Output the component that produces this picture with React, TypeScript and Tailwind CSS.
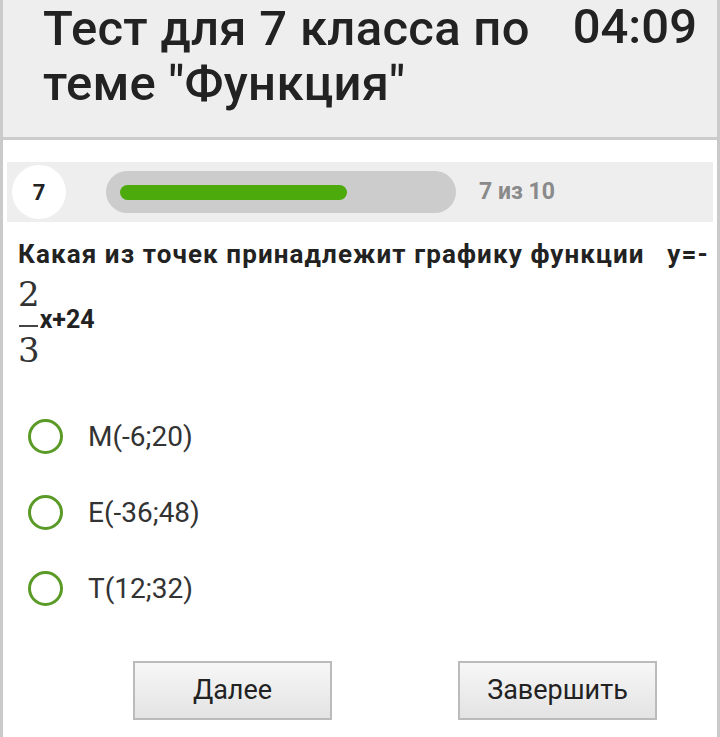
import React from "react";

const options = ["M(-6;20)", "E(-36;48)", "T(12;32)"];

export default function App() {
  return (
    <div className="h-[737px] w-[720px] overflow-hidden border-x-[3px] border-[#cacaca] bg-white font-['Roboto',sans-serif] text-[#222]">
      <header className="flex h-[140px] items-start justify-between border-b-[3px] border-[#cccccc] bg-[#eeeeee] pl-[40px] pr-[20px]">
        <h1 className="mt-[1px] w-[515px] text-[49px] font-medium leading-[55px] tracking-[0.3px] text-[#222]">
          Тест для 7 класса по теме "Функция"
        </h1>
        <div className="mt-[1px] text-[49px] font-medium leading-[51px] text-[#222]">04:09</div>
      </header>

      <div className="mx-[4px] mt-[22px] flex h-[60px] items-center bg-[#eeeeee] pl-[5px] pr-[6px]">
        <div className="flex h-[54px] w-[54px] items-center justify-center rounded-full bg-white text-[22px] font-bold">
          7
        </div>
        <div className="ml-[40px] flex h-[42px] w-[350px] items-center rounded-full bg-[#cccccc] px-[14px]">
          <div className="h-[15px] w-[227px] rounded-full bg-[#4caa0c]" />
        </div>
        <div className="ml-[23px] text-[23px] font-bold text-[#8a8a8a]">7 из 10</div>
      </div>

      <div className="pl-[15px] pr-[8px] pt-[17px]">
        <p className="whitespace-nowrap text-[26px] font-bold leading-[30px] tracking-[1.1px] text-[#222]">
          Какая из точек принадлежит графику функции&nbsp;&nbsp;&nbsp;y=-
        </p>
        <div className="mt-[11px] flex items-start">
          <span className="flex flex-col items-center font-['DejaVu_Serif','Liberation_Serif',serif] text-[34px] text-[#333]">
            <span className="h-[28px] leading-[28px]">2</span>
            <span className="mt-[17px] h-[2px] w-[19px] bg-[#444]" />
            <span className="mt-[9px] h-[28px] leading-[28px]">3</span>
          </span>
          <span className="mt-[27px] text-[25px] font-bold leading-[26px] text-[#222]">x+24</span>
        </div>
      </div>

      <div className="mt-[55px] flex flex-col gap-[41px] pl-[25px]">
        {options.map((o) => (
          <label key={o} className="flex h-[35px] items-center">
            <span className="h-[35px] w-[35px] shrink-0 rounded-full border-[3px] border-[#5a9a27]" />
            <span className="ml-[25px] text-[28px] leading-[32px] text-[#333]">{o}</span>
          </label>
        ))}
      </div>

      <div className="mt-[55px] flex justify-between pl-[130px] pr-[60px]">
        <button className="h-[59px] w-[199px] border-2 border-[#bbbbbb] bg-gradient-to-b from-[#f7f7f7] to-[#e3e3e3] text-[27px] text-[#222]">
          Далее
        </button>
        <button className="h-[59px] w-[199px] border-2 border-[#bbbbbb] bg-gradient-to-b from-[#f7f7f7] to-[#e3e3e3] text-[27px] text-[#222]">
          Завершить
        </button>
      </div>
    </div>
  );
}
